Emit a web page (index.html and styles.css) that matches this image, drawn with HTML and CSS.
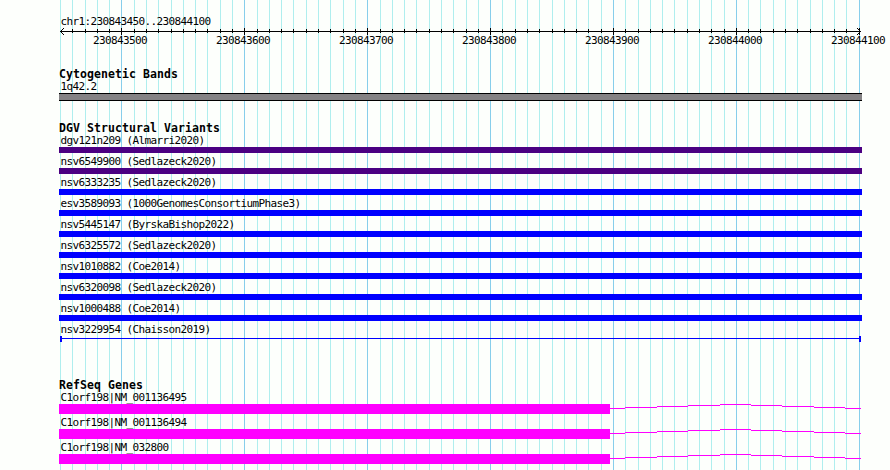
FILE: index.html
```
<!DOCTYPE html>
<html lang="en">
<head>
  <meta charset="UTF-8">
  <title>chr1:230843450..230844100</title>
  <link rel="stylesheet" href="styles.css">
</head>
<body>

<div class="browser">
  <svg class="grid" width="890" height="470" shape-rendering="crispEdges">
    <path id="gridMinor" class="grid-minor" />
    <path id="gridMajor" class="grid-major" />
  </svg>

  <div class="tracks">
    <div class="ruler">
      <div class="label">chr1:230843450..230844100</div>
      <svg class="axis" width="803" height="7" viewBox="59 28 803 7" shape-rendering="crispEdges">
        <path d="M60 31h801v1h-801z" />
        <path d="M61 30h1v3h-1zM62 29h1v1h-1zM62 33h1v1h-1zM63 28h1v1h-1zM63 34h1v1h-1z" />
        <path d="M859 30h1v3h-1zM858 29h1v1h-1zM858 33h1v1h-1zM857 28h1v1h-1zM857 34h1v1h-1z" />
        <path id="ticks" />
      </svg>
      <div class="numbers">
        <span>230843500</span>
        <span>230843600</span>
        <span>230843700</span>
        <span>230843800</span>
        <span>230843900</span>
        <span>230844000</span>
        <span>230844100</span>
      </div>
    </div>

    <div class="track cytobands">
      <h2>Cytogenetic Bands</h2>
      <div class="label">1q42.2</div>
      <div class="band"></div>
    </div>

    <div class="track variants">
      <h2>DGV Structural Variants</h2>
      <div class="feature"><div class="label">dgv121n209 (Almarri2020)</div><div class="bar complex"></div></div>
      <div class="feature"><div class="label">nsv6549900 (Sedlazeck2020)</div><div class="bar complex"></div></div>
      <div class="feature"><div class="label">nsv6333235 (Sedlazeck2020)</div><div class="bar gain"></div></div>
      <div class="feature"><div class="label">esv3589093 (1000GenomesConsortiumPhase3)</div><div class="bar gain"></div></div>
      <div class="feature"><div class="label">nsv5445147 (ByrskaBishop2022)</div><div class="bar gain"></div></div>
      <div class="feature"><div class="label">nsv6325572 (Sedlazeck2020)</div><div class="bar gain"></div></div>
      <div class="feature"><div class="label">nsv1010882 (Coe2014)</div><div class="bar gain"></div></div>
      <div class="feature"><div class="label">nsv6320098 (Sedlazeck2020)</div><div class="bar gain"></div></div>
      <div class="feature"><div class="label">nsv1000488 (Coe2014)</div><div class="bar gain"></div></div>
      <div class="feature"><div class="label">nsv3229954 (Chaisson2019)</div><div class="span"><i></i><i></i></div></div>
    </div>

    <div class="track genes">
      <h2>RefSeq Genes</h2>
      <div class="gene">
        <div class="label">C1orf198|NM_001136495</div>
        <div class="model"><div class="exon"></div><svg class="intron" width="251" height="10" shape-rendering="crispEdges"><use href="#intron" /></svg></div>
      </div>
      <div class="gene">
        <div class="label">C1orf198|NM_001136494</div>
        <div class="model"><div class="exon"></div><svg class="intron" width="251" height="10" shape-rendering="crispEdges"><use href="#intron" /></svg></div>
      </div>
      <div class="gene">
        <div class="label">C1orf198|NM_032800</div>
        <div class="model">
          <div class="exon"></div>
          <svg class="intron" width="251" height="10" shape-rendering="crispEdges">
            <path id="intron" d="M0 4h15v1h-15zM15 3h32v1h-32zM47 2h31v1h-31zM78 1h32v1h-32zM110 0h31v1h-31zM141 1h31v1h-31zM172 2h32v1h-32zM204 3h31v1h-31zM235 4h16v1h-16z" />
          </svg>
        </div>
      </div>
    </div>
  </div>
</div>

<script>
  // one grid line every 10 bp, a major one every 100 bp
  const start = 60.52;
  const step = 12.288;
  let minor = '';
  let major = '';
  let ticks = '';

  for (let i = 0; i <= 65; i++) {
    const x = Math.floor(start + i * step);
    if (i % 10 === 5) {
      major += `M${x} 0h1v470h-1z`;
      ticks += `M${x} 28h1v7h-1z`;
    } else {
      minor += `M${x} 0h1v470h-1z`;
      if (i > 0) ticks += `M${x} 29h1v4h-1z`;
    }
  }

  document.getElementById('gridMinor').setAttribute('d', minor);
  document.getElementById('gridMajor').setAttribute('d', major);
  document.getElementById('ticks').setAttribute('d', ticks);
</script>

</body>
</html>
```
FILE: styles.css
```
body {
  margin: 0;
  background: #fdfffc;
  color: #000;
  font-family: "DejaVu Sans Mono", monospace;
  font-size: 11px;
  line-height: 13px;
}

svg {
  display: block;
}

/* grid lines and tracks share the same cell */
.browser {
  display: grid;
  width: 890px;
  height: 470px;
  overflow: hidden;
}

.grid,
.tracks {
  grid-area: 1 / 1;
}

.grid-minor {
  fill: #afeeee;
}

.grid-major {
  fill: #87ceeb;
}

.tracks {
  padding: 15px 0 0 59px;
}

.label {
  height: 13px;
  padding-left: 1.4px;
  letter-spacing: -0.622px;
  white-space: pre;
}

h2 {
  margin: 0;
  height: 12px;
  font-size: 11.5px;
  font-weight: bold;
  line-height: 13px;
  letter-spacing: 0.077px;
  white-space: pre;
}

.numbers {
  display: flex;
  gap: 69px;
  height: 13px;
  margin-top: -1px;
  padding-left: 34px;
  letter-spacing: -0.622px;
}

.numbers span {
  flex: none;
  width: 54px;
}

.track {
  width: 803px;
}

.cytobands {
  margin-top: 21px;
}

.band {
  box-sizing: border-box;
  height: 8px;
  background: #848284;
  border-top: 1px solid #000;
  border-bottom: 1px solid #000;
}

.variants {
  margin-top: 21px;
}

.feature {
  height: 21px;
}

.bar {
  height: 6px;
}

.complex {
  background: #4b0082;
}

.gain {
  background: #0000ff;
}

.span {
  display: flex;
  justify-content: space-between;
  height: 6px;
  margin: 0 1px;
  background: linear-gradient(#0000ff, #0000ff) 0 2px / 100% 1px no-repeat;
}

.span i {
  width: 2px;
  background: #0000ff;
}

.genes {
  margin-top: 35px;
}

.gene {
  height: 25px;
}

.model {
  display: flex;
}

.exon {
  width: 551px;
  height: 10px;
  background: #ff00ff;
}

.intron {
  fill: #ff00ff;
}
```
